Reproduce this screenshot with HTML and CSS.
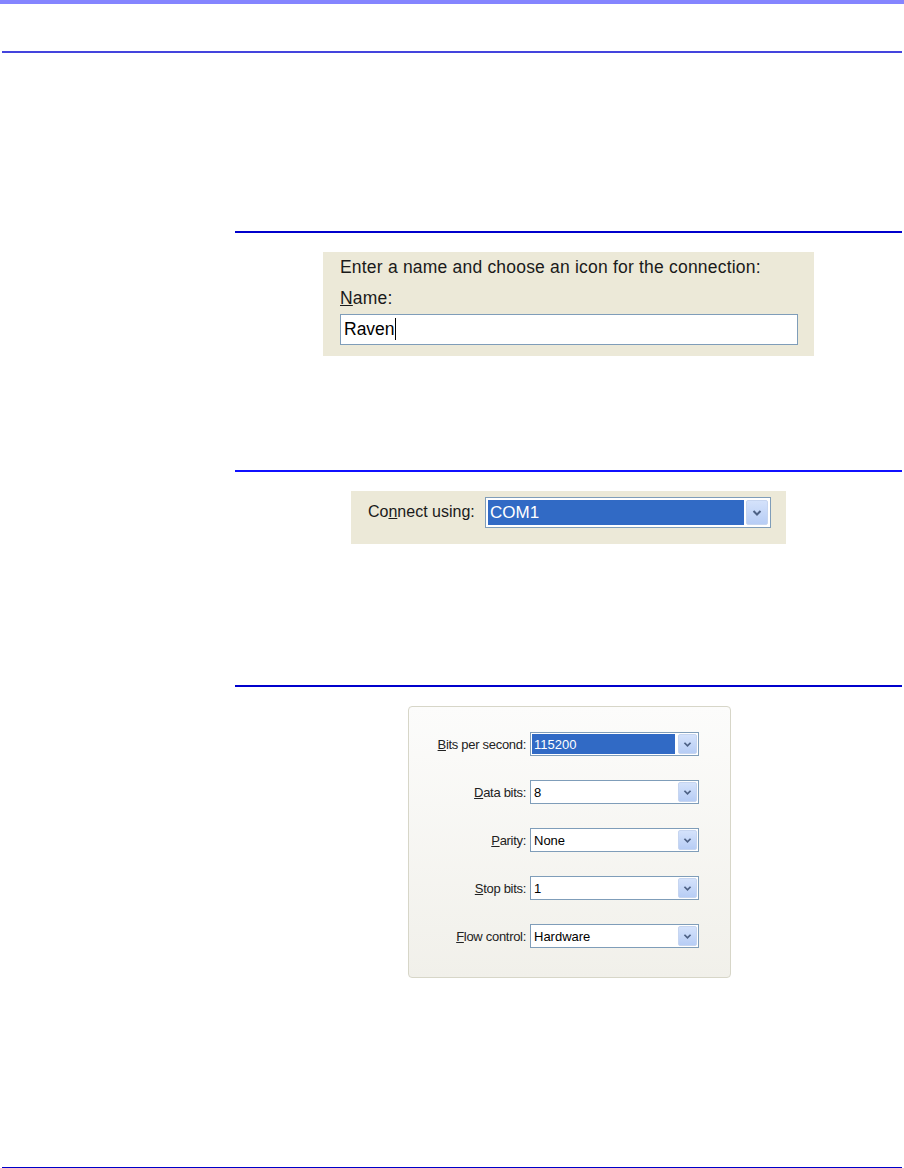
FILE: index.html
```html
<!DOCTYPE html>
<html>
<head>
<meta charset="utf-8">
<link rel="stylesheet" href="styles.css">
</head>
<body>
<div class="page">
  <div class="topbar"></div>
  <div class="header"></div>
  <div class="rule rule-top"></div>

  <div class="section s1">
    <div class="srule"></div>
    <div class="fig fig1">
      <div class="xp-text">Enter a name and choose an icon for the connection:</div>
      <div class="xp-text name-label"><u>N</u>ame:</div>
      <div class="xp-input">Raven<span class="caret"></span></div>
    </div>
  </div>

  <div class="section s2">
    <div class="srule"></div>
    <div class="fig fig2">
      <div class="xp-text">Co<u>n</u>nect using:</div>
      <div class="xp-select big">
        <div class="val sel">COM1</div>
        <div class="btn"><svg viewBox="0 0 10 8" width="10" height="8"><path d="M1.5 2 L5 5.5 L8.5 2" fill="none" stroke="#4d6185" stroke-width="2"/></svg></div>
      </div>
    </div>
  </div>

  <div class="section s3">
    <div class="srule"></div>
    <div class="fig fig3">
      <div class="row">
        <div class="lbl"><u>B</u>its per second:</div>
        <div class="xp-select small"><div class="val sel">115200</div><div class="btn"><svg viewBox="0 0 10 8" width="9" height="7"><path d="M1.5 2 L5 5.5 L8.5 2" fill="none" stroke="#4d6185" stroke-width="2"/></svg></div></div>
      </div>
      <div class="row">
        <div class="lbl"><u>D</u>ata bits:</div>
        <div class="xp-select small"><div class="val">8</div><div class="btn"><svg viewBox="0 0 10 8" width="9" height="7"><path d="M1.5 2 L5 5.5 L8.5 2" fill="none" stroke="#4d6185" stroke-width="2"/></svg></div></div>
      </div>
      <div class="row">
        <div class="lbl"><u>P</u>arity:</div>
        <div class="xp-select small"><div class="val">None</div><div class="btn"><svg viewBox="0 0 10 8" width="9" height="7"><path d="M1.5 2 L5 5.5 L8.5 2" fill="none" stroke="#4d6185" stroke-width="2"/></svg></div></div>
      </div>
      <div class="row">
        <div class="lbl"><u>S</u>top bits:</div>
        <div class="xp-select small"><div class="val">1</div><div class="btn"><svg viewBox="0 0 10 8" width="9" height="7"><path d="M1.5 2 L5 5.5 L8.5 2" fill="none" stroke="#4d6185" stroke-width="2"/></svg></div></div>
      </div>
      <div class="row">
        <div class="lbl"><u>F</u>low control:</div>
        <div class="xp-select small"><div class="val">Hardware</div><div class="btn"><svg viewBox="0 0 10 8" width="9" height="7"><path d="M1.5 2 L5 5.5 L8.5 2" fill="none" stroke="#4d6185" stroke-width="2"/></svg></div></div>
      </div>
    </div>
  </div>

  <div class="spacer"></div>
  <div class="rule rule-bottom"></div>
</div>
</body>
</html>
```

FILE: styles.css
```css
html, body {
  margin: 0;
  padding: 0;
  background: #ffffff;
}
.page {
  width: 904px;
  height: 1168px;
  display: flex;
  flex-direction: column;
  font-family: "Liberation Sans", Arial, sans-serif;
  color: #000;
  overflow: hidden;
}
.topbar {
  height: 4px;
  background: #8585ff;
}
.header {
  height: 47px;
}
.rule {
  height: 1px;
  margin: 0 2px;
}
.rule-top {
  background: #4444dd;
  height: 2px;
}
.rule-bottom {
  background: #0000c8;
  height: 1px;
}
.section {
  display: flex;
  flex-direction: column;
}
.s1 { margin-top: 178px; }
.s2 { margin-top: 114px; }
.s3 { margin-top: 141px; }
.srule {
  height: 2px;
  margin-left: 235px;
  margin-right: 2px;
  background: #0000cc;
}
.s2 .srule { background: #1010ff; height: 2px; }
.fig {
  margin-top: 19px;
  background: #ece9d8;
  box-sizing: border-box;
}
.xp-text {
  font-family: "Liberation Sans", Arial, sans-serif;
  font-size: 17.5px;
  color: #1a1a1a;
  letter-spacing: 0.2px;
}
.fig1 {
  margin-left: 323px;
  width: 491px;
  height: 104px;
  padding: 5px 16px 0 17px;
  display: flex;
  flex-direction: column;
}
.name-label {
  margin-top: 10px;
}
.xp-input {
  margin-top: 5px;
  height: 31px;
  width: 458px;
  box-sizing: border-box;
  border: 1px solid #7f9db9;
  background: #fff;
  font-family: "Liberation Sans", Arial, sans-serif;
  font-size: 17.5px;
  padding: 4px 0 0 3px;
  display: flex;
  align-items: flex-start;
}
.caret {
  display: inline-block;
  width: 1.5px;
  height: 22px;
  background: #000;
  margin-top: -1px;
}
.fig2 {
  margin-left: 351px;
  width: 435px;
  height: 53px;
  padding: 0 0 0 17px;
  display: flex;
  align-items: flex-start;
  align-self: flex-start;
}
.fig2 .xp-text {
  width: 117px;
  font-size: 16px;
  letter-spacing: 0;
  margin-top: 12px;
}
.xp-select {
  box-sizing: border-box;
  border: 1px solid #7f9db9;
  background: #fff;
  display: flex;
  padding: 2px;
  gap: 2px;
}
.xp-select.big {
  width: 286px;
  height: 31px;
  margin-top: 6px;
}
.xp-select .val {
  flex: 1;
  display: flex;
  align-items: center;
  font-family: "Liberation Sans", Arial, sans-serif;
  padding-left: 2px;
}
.xp-select.big .val {
  font-size: 17px;
}
.xp-select .sel {
  background: #316ac5;
  color: #fff;
}
.xp-select .btn {
  width: 22px;
  background: linear-gradient(#d4e2fb, #b7cdf5);
  border: 1px solid #c6d5f0;
  box-sizing: border-box;
  display: flex;
  align-items: center;
  justify-content: center;
  border-radius: 2px;
}
.xp-select.small .btn {
  width: 19px;
}
.fig3 {
  margin-left: 408px;
  width: 323px;
  height: 272px;
  border: 1px solid #d7d6c8;
  border-radius: 4px;
  background: linear-gradient(#fcfcfb, #f1f0ea);
  padding: 25px 0 0 0;
  display: flex;
  flex-direction: column;
  gap: 24px;
}
.row {
  display: flex;
  align-items: center;
  height: 24px;
}
.lbl {
  width: 121px;
  text-align: right;
  font-family: "Liberation Sans", Arial, sans-serif;
  font-size: 13px;
  letter-spacing: -0.3px;
  color: #222;
  padding-right: 4px;
  box-sizing: border-box;
}
.xp-select.small {
  width: 169px;
  height: 24px;
  padding: 1px;
}
.xp-select.small .val {
  font-size: 13px;
}
.xp-select.small .sel {
  margin-right: 1px;
}
.spacer {
  flex: 1;
}
```
